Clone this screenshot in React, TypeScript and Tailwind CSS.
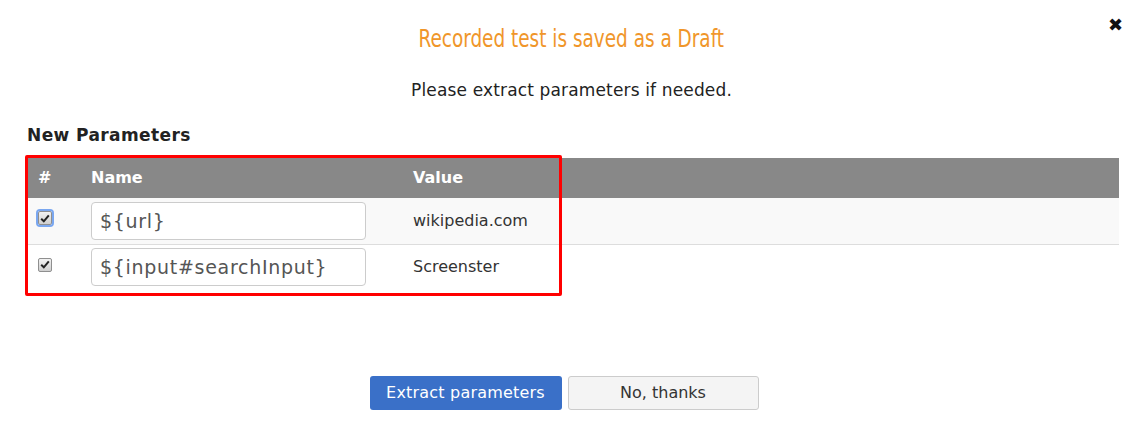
import React from "react";

function Check({ focused }: { focused?: boolean }) {
  return (
    <div
      className={`flex h-[14px] w-[14px] items-center justify-center rounded-[2px] border border-[#8f8f8f] bg-gradient-to-b from-[#f2f2f2] to-[#cfcfcf] ${
        focused ? "outline outline-2 outline-[#7aa7f0] outline-offset-0" : ""
      }`}
    >
      <svg width="10" height="9" viewBox="0 0 10 9">
        <path d="M1.2 4.8 L3.8 7.3 L8.8 1.3" fill="none" stroke="#222" strokeWidth="2" />
      </svg>
    </div>
  );
}

export default function App() {
  const rows = [
    { name: "${url}", value: "wikipedia.com", bg: "bg-[#f9f9f9]", focused: true },
    { name: "${input#searchInput}", value: "Screenster", bg: "bg-white", focused: false },
  ];
  return (
    <div className="relative h-[432px] w-[1143px] bg-white font-['DejaVu_Sans',sans-serif] text-[#222]">
      <button className="absolute right-[20px] top-[16px] text-[18px] font-bold leading-none text-[#111]">
        ✖
      </button>
      <div className="flex flex-col items-center pt-[24px]">
        <div className="origin-center scale-x-[0.82] font-['Liberation_Sans_Narrow','DejaVu_Sans_Condensed',sans-serif] text-[25px] leading-[30px] text-[#f0962a]">
          Recorded test is saved as a Draft
        </div>
        <div className="mt-[26px] text-[17px] leading-[20px] tracking-[0.15px] text-[#222]">
          Please extract parameters if needed.
        </div>
      </div>
      <div className="px-[26px] pt-[25px]">
        <div className="pl-[1px] text-[17px] font-bold leading-[20px] tracking-[0.4px] text-[#222]">New Parameters</div>
        <div className="relative mt-[13px]">
          <table className="ml-[2px] w-[1091px] border-collapse text-[16px]">
            <thead>
              <tr className="h-[40px] bg-[#888] text-left text-white">
                <th className="w-[63px] pl-[10px] font-bold">#</th>
                <th className="w-[322px] font-bold">Name</th>
                <th className="font-bold">Value</th>
              </tr>
            </thead>
            <tbody>
              {rows.map((r, i) => (
                <tr key={i} className={`h-[46px] ${i === 0 ? "border-b border-[#ddd]" : ""} ${r.bg}`}>
                  <td className="pl-[10px] pt-[13px] align-top">
                    <Check focused={r.focused} />
                  </td>
                  <td>
                    <div className="flex h-[38px] w-[275px] items-center rounded-[4px] border border-[#ccc] bg-white px-[8px] text-[19px] tracking-[0.7px] text-[#555]">
                      {r.name}
                    </div>
                  </td>
                  <td className="text-[16px] text-[#333]">{r.value}</td>
                </tr>
              ))}
            </tbody>
          </table>
          <div className="pointer-events-none absolute left-[-1px] top-[-3px] h-[141px] w-[537px] rounded-[2px] border-[3px] border-[#ff0000]" />
        </div>
      </div>
      <div className="mt-[86px] flex justify-center gap-[6px] pr-[15px]">
        <button className="h-[34px] w-[192px] rounded-[3px] bg-[#3a70c8] text-[16px] tracking-[0.2px] text-white">
          Extract parameters
        </button>
        <button className="h-[34px] w-[191px] rounded-[3px] border border-[#ccc] bg-[#f4f4f4] text-[16px] text-[#333]">
          No, thanks
        </button>
      </div>
    </div>
  );
}
